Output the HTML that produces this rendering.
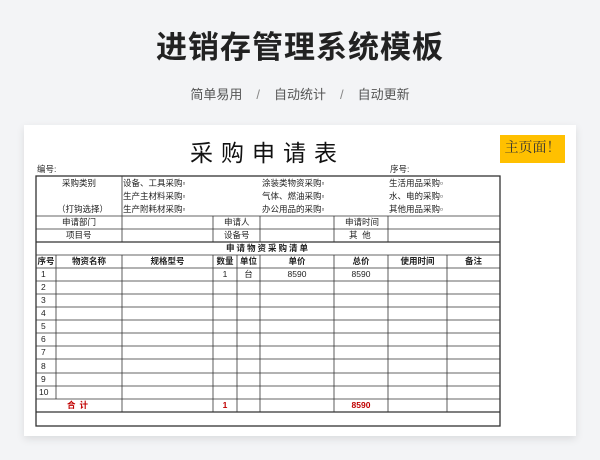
<!DOCTYPE html>
<html><head><meta charset="utf-8"><style>
*{margin:0;padding:0;box-sizing:border-box}
body{width:600px;height:460px;background:#f3f4f6;font-family:"Liberation Sans","Noto Sans CJK SC",sans-serif;position:relative;overflow:hidden}
.h1{position:absolute;top:22px;left:0;width:600px;text-align:center;font-size:31px;font-weight:bold;color:#222;letter-spacing:1px}
.sub{position:absolute;top:84px;left:0;width:600px;text-align:center;font-size:13px;color:#555;word-spacing:0}
.sub span{margin:0 14px;color:#888}
.card{position:absolute;left:24px;top:125px;width:552px;height:311px;background:#fff;box-shadow:0 3px 8px rgba(0,0,0,.1)}
.t{position:absolute;font-size:8.5px;color:#222;white-space:nowrap;line-height:13px}
.title{position:absolute;left:190px;top:134px;font-size:23px;letter-spacing:8px;color:#111}
.btn{position:absolute;left:500px;top:135px;width:65px;height:28px;background:#ffc000;font-family:"Liberation Serif","Noto Serif CJK SC",serif;font-size:14px;line-height:28px;text-align:center;color:#333}
.l{position:absolute;background:#333}
.b{font-weight:bold}.c{text-align:center}.r{color:#c00000;font-weight:bold}
</style></head><body>
<div class="h1">进销存管理系统模板</div>
<div class="sub">简单易用<span>/</span>自动统计<span>/</span>自动更新</div>
<div class="card"></div>
<div class="title">采购申请表</div>
<div class="btn">主页面！</div>
<div class="t" style="left:37px;top:163px">编号:</div>
<div class="t" style="left:390px;top:163px">序号:</div>
<svg style="position:absolute;left:0;top:0" width="600" height="460">
<g stroke="#333" stroke-width="0.8" fill="none">
<rect x="36" y="176" width="464" height="250" stroke-width="1.3"/>
<line x1="36" y1="216" x2="500" y2="216"/>
<line x1="36" y1="229" x2="500" y2="229"/>
<line x1="36" y1="242" x2="500" y2="242" stroke-width="1.3"/>
<line x1="36" y1="255" x2="500" y2="255"/>
<line x1="36" y1="268" x2="500" y2="268"/>
<line x1="36" y1="281" x2="500" y2="281"/><line x1="36" y1="294" x2="500" y2="294"/><line x1="36" y1="307" x2="500" y2="307"/><line x1="36" y1="320" x2="500" y2="320"/><line x1="36" y1="333" x2="500" y2="333"/><line x1="36" y1="346" x2="500" y2="346"/><line x1="36" y1="359" x2="500" y2="359"/><line x1="36" y1="373" x2="500" y2="373"/><line x1="36" y1="386" x2="500" y2="386"/>
<line x1="36" y1="399" x2="500" y2="399"/>
<line x1="36" y1="412" x2="500" y2="412" stroke-width="1.3"/>
<line x1="122" y1="176" x2="122" y2="242"/>
<line x1="213" y1="216" x2="213" y2="242"/>
<line x1="260" y1="216" x2="260" y2="242"/>
<line x1="334" y1="216" x2="334" y2="242"/>
<line x1="388" y1="216" x2="388" y2="242"/>
<line x1="56" y1="255" x2="56" y2="399"/>
<line x1="122" y1="255" x2="122" y2="412"/>
<line x1="213" y1="255" x2="213" y2="412"/>
<line x1="237" y1="255" x2="237" y2="412"/>
<line x1="260" y1="255" x2="260" y2="412"/>
<line x1="334" y1="255" x2="334" y2="412"/>
<line x1="388" y1="255" x2="388" y2="412"/>
<line x1="447" y1="255" x2="447" y2="412"/>
</g></svg>
<div class="t" style="left:62px;top:177px">采购类别</div>
<div class="t" style="left:57px;top:203px">（打钩选择）</div>
<div class="t" style="left:123px;top:177px">设备、工具采购▫</div>
<div class="t" style="left:123px;top:190px">生产主材料采购▫</div>
<div class="t" style="left:123px;top:203px">生产附耗材采购▫</div>
<div class="t" style="left:262px;top:177px">涂装类物资采购▫</div>
<div class="t" style="left:262px;top:190px">气体、燃油采购▫</div>
<div class="t" style="left:262px;top:203px">办公用品的采购▫</div>
<div class="t" style="left:389px;top:177px">生活用品采购▫</div>
<div class="t" style="left:389px;top:190px">水、电的采购▫</div>
<div class="t" style="left:389px;top:203px">其他用品采购▫</div>
<div class="t" style="left:62px;top:216px">申请部门</div>
<div class="t" style="left:66px;top:229px">项目号</div>
<div class="t" style="left:224px;top:216px">申请人</div>
<div class="t" style="left:224px;top:229px">设备号</div>
<div class="t" style="left:345px;top:216px">申请时间</div>
<div class="t" style="left:349px;top:229px">其&nbsp;&nbsp;他</div>
<div class="t b" style="left:226px;top:242px;letter-spacing:2px">申请物资采购清单</div>
<div class="t b c" style="left:36px;top:255px;width:20px">序号</div>
<div class="t b c" style="left:56px;top:255px;width:66px">物资名称</div>
<div class="t b c" style="left:122px;top:255px;width:91px">规格型号</div>
<div class="t b c" style="left:213px;top:255px;width:24px">数量</div>
<div class="t b c" style="left:237px;top:255px;width:23px">单位</div>
<div class="t b c" style="left:260px;top:255px;width:74px">单价</div>
<div class="t b c" style="left:334px;top:255px;width:54px">总价</div>
<div class="t b c" style="left:388px;top:255px;width:59px">使用时间</div>
<div class="t b c" style="left:447px;top:255px;width:53px">备注</div>
<div class="t c" style="left:213px;top:268px;width:24px">1</div>
<div class="t c" style="left:237px;top:268px;width:23px">台</div>
<div class="t c" style="left:260px;top:268px;width:74px">8590</div>
<div class="t c" style="left:334px;top:268px;width:54px">8590</div>
<div class="t" style="left:41px;top:268px">1</div><div class="t" style="left:41px;top:281px">2</div><div class="t" style="left:41px;top:294px">3</div><div class="t" style="left:41px;top:307px">4</div><div class="t" style="left:41px;top:320px">5</div><div class="t" style="left:41px;top:333px">6</div><div class="t" style="left:41px;top:346px">7</div><div class="t" style="left:41px;top:360px">8</div><div class="t" style="left:41px;top:373px">9</div><div class="t" style="left:39px;top:386px">10</div>
<div class="t r" style="left:67px;top:399px;letter-spacing:4px">合计</div>
<div class="t r c" style="left:213px;top:399px;width:24px">1</div>
<div class="t r c" style="left:334px;top:399px;width:54px">8590</div>
</body></html>
